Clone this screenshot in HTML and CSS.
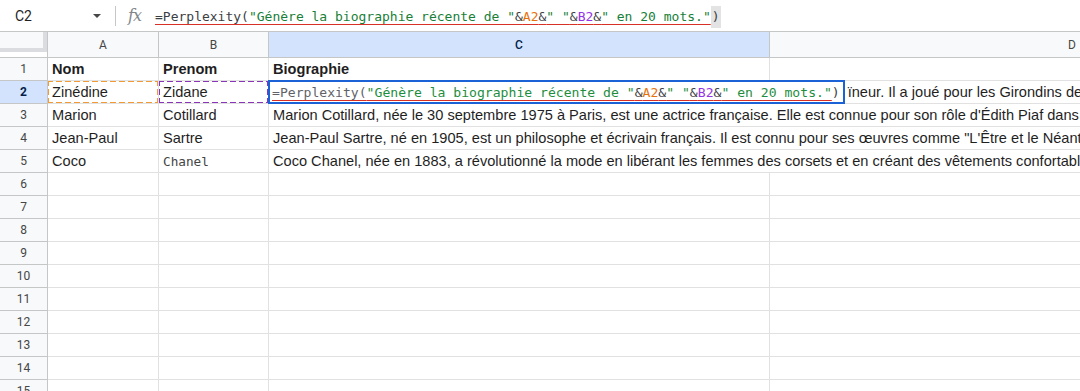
FILE: index.html
```html
<!DOCTYPE html>
<html lang="fr">
<head>
<meta charset="utf-8">
<title>Perplexity — Sheets</title>
<link rel="stylesheet" href="styles.css">
</head>
<body>
<div class="app">
  <div class="fbar">
    <div class="namebox">
      <span class="ref">C2</span>
      <svg class="caret" width="8" height="4" viewBox="0 0 8 4"><path d="M0 0h8L4 4z" fill="#444746"/></svg>
    </div>
    <div class="sep"></div>
    <span class="fx">fx</span>
    <div class="formula"><span class="err"><span class="fn">=Perplexity(</span><span class="str">"Génère la biographie récente de "</span><span class="op">&amp;</span><span class="ra">A2</span><span class="op">&amp;</span><span class="str">" "</span><span class="op">&amp;</span><span class="rb">B2</span><span class="op">&amp;</span><span class="str">" en 20 mots."</span></span><span class="paren">)</span></div>
  </div>

  <div class="sheet">
    <div class="corner"><div class="corner-box"></div></div>
    <div class="ch">A</div>
    <div class="ch">B</div>
    <div class="ch ch-sel">C</div>
    <div class="ch ch-last">D</div>

    <div class="rh">1</div>
    <div class="c b">Nom</div>
    <div class="c b">Prenom</div>
    <div class="c b">Biographie</div>
    <div class="c"></div>

    <div class="rh rh-sel">2</div>
    <div class="c ref-a">Zinédine</div>
    <div class="c ref-b">Zidane</div>
    <div class="c over edit-cell">
      <div class="editor"><span class="err"><span class="fn2">=Perplexity(</span><span class="str2">"Génère la biographie récente de "</span><span class="op2">&amp;</span><span class="ra">A2</span><span class="op2">&amp;</span><span class="str2">" "</span><span class="op2">&amp;</span><span class="rb">B2</span><span class="op2">&amp;</span><span class="str2">" en 20 mots."</span></span><span class="op2">)</span></div>
      <span class="tail">ïneur. Il a joué pour les Girondins de Bordeaux.</span>
    </div>
    <div class="c"></div>

    <div class="rh">3</div>
    <div class="c">Marion</div>
    <div class="c">Cotillard</div>
    <div class="c over">Marion Cotillard, née le 30 septembre 1975 à Paris, est une actrice française. Elle est connue pour son rôle d'Édith Piaf dans La Môme.</div>
    <div class="c"></div>

    <div class="rh">4</div>
    <div class="c">Jean-Paul</div>
    <div class="c">Sartre</div>
    <div class="c over">Jean-Paul Sartre, né en 1905, est un philosophe et écrivain français. Il est connu pour ses œuvres comme "L'Être et le Néant".</div>
    <div class="c"></div>

    <div class="rh">5</div>
    <div class="c">Coco</div>
    <div class="c mono">Chanel</div>
    <div class="c over">Coco Chanel, née en 1883, a révolutionné la mode en libérant les femmes des corsets et en créant des vêtements confortables.</div>
    <div class="c"></div>

    <div class="rh">6</div><div class="c"></div><div class="c"></div><div class="c"></div><div class="c"></div>
    <div class="rh">7</div><div class="c"></div><div class="c"></div><div class="c"></div><div class="c"></div>
    <div class="rh">8</div><div class="c"></div><div class="c"></div><div class="c"></div><div class="c"></div>
    <div class="rh">9</div><div class="c"></div><div class="c"></div><div class="c"></div><div class="c"></div>
    <div class="rh">10</div><div class="c"></div><div class="c"></div><div class="c"></div><div class="c"></div>
    <div class="rh">11</div><div class="c"></div><div class="c"></div><div class="c"></div><div class="c"></div>
    <div class="rh">12</div><div class="c"></div><div class="c"></div><div class="c"></div><div class="c"></div>
    <div class="rh">13</div><div class="c"></div><div class="c"></div><div class="c"></div><div class="c"></div>
    <div class="rh">14</div><div class="c"></div><div class="c"></div><div class="c"></div><div class="c"></div>
    <div class="rh">15</div><div class="c"></div><div class="c"></div><div class="c"></div><div class="c"></div>
  </div>
</div>
</body>
</html>
```

FILE: styles.css
```css
html, body {
  margin: 0;
  padding: 0;
  background: #ffffff;
}
body {
  width: 1080px;
  height: 391px;
  overflow: hidden;
  font-family: "Liberation Sans", Arial, sans-serif;
  color: #1f1f1f;
}
.app {
  width: 1080px;
  height: 391px;
  overflow: hidden;
}

/* formula bar */
.fbar {
  height: 31px;
  display: flex;
  align-items: center;
  background: #ffffff;
}
.namebox {
  width: 114px;
  display: flex;
  align-items: center;
  padding-left: 15px;
  box-sizing: border-box;
}
.ref {
  font-family: "Roboto", "Liberation Sans", sans-serif;
  font-size: 14px;
  color: #1f1f1f;
  width: 78px;
}
.caret { display: block; margin-top: 1px; }
.sep {
  width: 1px;
  height: 20px;
  background: #c7c7c7;
  margin-left: 1px;
}
.fx {
  font-family: "DejaVu Serif", "Liberation Serif", serif;
  font-style: italic;
  font-size: 16px;
  color: #80868b;
  margin-left: 12px;
  width: 27px;
  letter-spacing: -1px;
}
.formula {
  font-family: "DejaVu Sans Mono", monospace;
  font-size: 13px;
  white-space: nowrap;
  color: #3c4043;
  padding-top: 1px;
}
.err {
  text-decoration: underline;
  text-decoration-color: #d93025;
  text-underline-offset: 3px;
  text-decoration-thickness: 1px;
}
.fn { color: #3c4043; }
.op { color: #3c4043; }
.str { color: #188038; }
.ra { color: #e8710a; }
.rb { color: #9334e6; }
.paren {
  background: #e3e3e3;
  padding: 3px 1px 4px 1px;
}

/* grid */
.sheet {
  display: grid;
  grid-template-columns: 48px 111px 110px 501px 620px;
  grid-template-rows: 26px repeat(15, 23px);
  border-top: 1px solid #c4c7c5;
}
.sheet > div {
  box-sizing: border-box;
  border-right: 1px solid #e1e1e1;
  border-bottom: 1px solid #e1e1e1;
  min-width: 0;
}
.corner {
  background: #ffffff;
  border-right: 1px solid #c4c7c5 !important;
  border-bottom: 1px solid #c4c7c5 !important;
  position: relative;
}
.corner-box {
  height: 20px;
  width: 47px;
  box-sizing: border-box;
  background: #f8f9fa;
  border-right: 4px solid #dadce0;
  border-bottom: 4px solid #dadce0;
}
.ch {
  background: #f8f9fa;
  border-right: 1px solid #c4c7c5 !important;
  border-bottom: 1px solid #c4c7c5 !important;
  display: flex;
  align-items: center;
  justify-content: center;
  font-family: "Roboto", "Liberation Sans", sans-serif;
  font-size: 12px;
  color: #444746;
}
.ch-sel {
  background: #d3e3fd;
  color: #041e49;
  font-weight: 500;
}
.ch-last {
  justify-content: flex-start;
  padding-left: 298px;
}
.rh {
  background: #f8f9fa;
  border-right: 1px solid #c4c7c5 !important;
  border-bottom: 1px solid #c4c7c5 !important;
  display: flex;
  align-items: center;
  justify-content: center;
  font-family: "Roboto", "Liberation Sans", sans-serif;
  font-size: 12px;
  color: #444746;
}
.rh-sel {
  background: #d3e3fd;
  color: #041e49;
  font-weight: 700;
}
.c {
  display: flex;
  align-items: center;
  padding-left: 4px;
  font-size: 14.6px;
  white-space: nowrap;
  overflow: hidden;
  position: relative;
  color: #1f1f1f;
}
.b { font-weight: 700; }
.mono {
  font-family: "DejaVu Sans Mono", monospace;
  font-size: 12.7px;
  color: #444444;
}
.over {
  overflow: visible;
  border-right: none !important;
  z-index: 1;
}
.ref-a::after, .ref-b::after {
  content: "";
  position: absolute;
  left: -1px;
  top: -1px;
  right: -1px;
  bottom: -1px;
  pointer-events: none;
  --dash: #f29a38;
  background:
    linear-gradient(90deg, var(--dash) 6px, transparent 6px) top left / 9px 2px repeat-x,
    linear-gradient(90deg, var(--dash) 6px, transparent 6px) bottom left / 9px 2px repeat-x,
    linear-gradient(180deg, var(--dash) 6px, transparent 6px) top left / 2px 9px repeat-y,
    linear-gradient(180deg, var(--dash) 6px, transparent 6px) top right / 2px 9px repeat-y;
}
.ref-b::after {
  --dash: #8a35b8;
}
.edit-cell {
  padding-left: 0;
  align-items: stretch;
}
.editor {
  box-sizing: border-box;
  margin: -1px 0 -1px -1px;
  border: 2px solid #1a62d6;
  background: #ffffff;
  padding: 0 3px 0 2px;
  display: flex;
  align-items: center;
  font-family: "DejaVu Sans Mono", monospace;
  font-size: 13.1px;
  white-space: nowrap;
  position: relative;
  z-index: 2;
}
.fn2 { color: #5f6368; }
.op2 { color: #3c4043; }
.str2 { color: #1e8e3e; }
.tail {
  margin-left: 3px;
  display: flex;
  align-items: center;
}
```
